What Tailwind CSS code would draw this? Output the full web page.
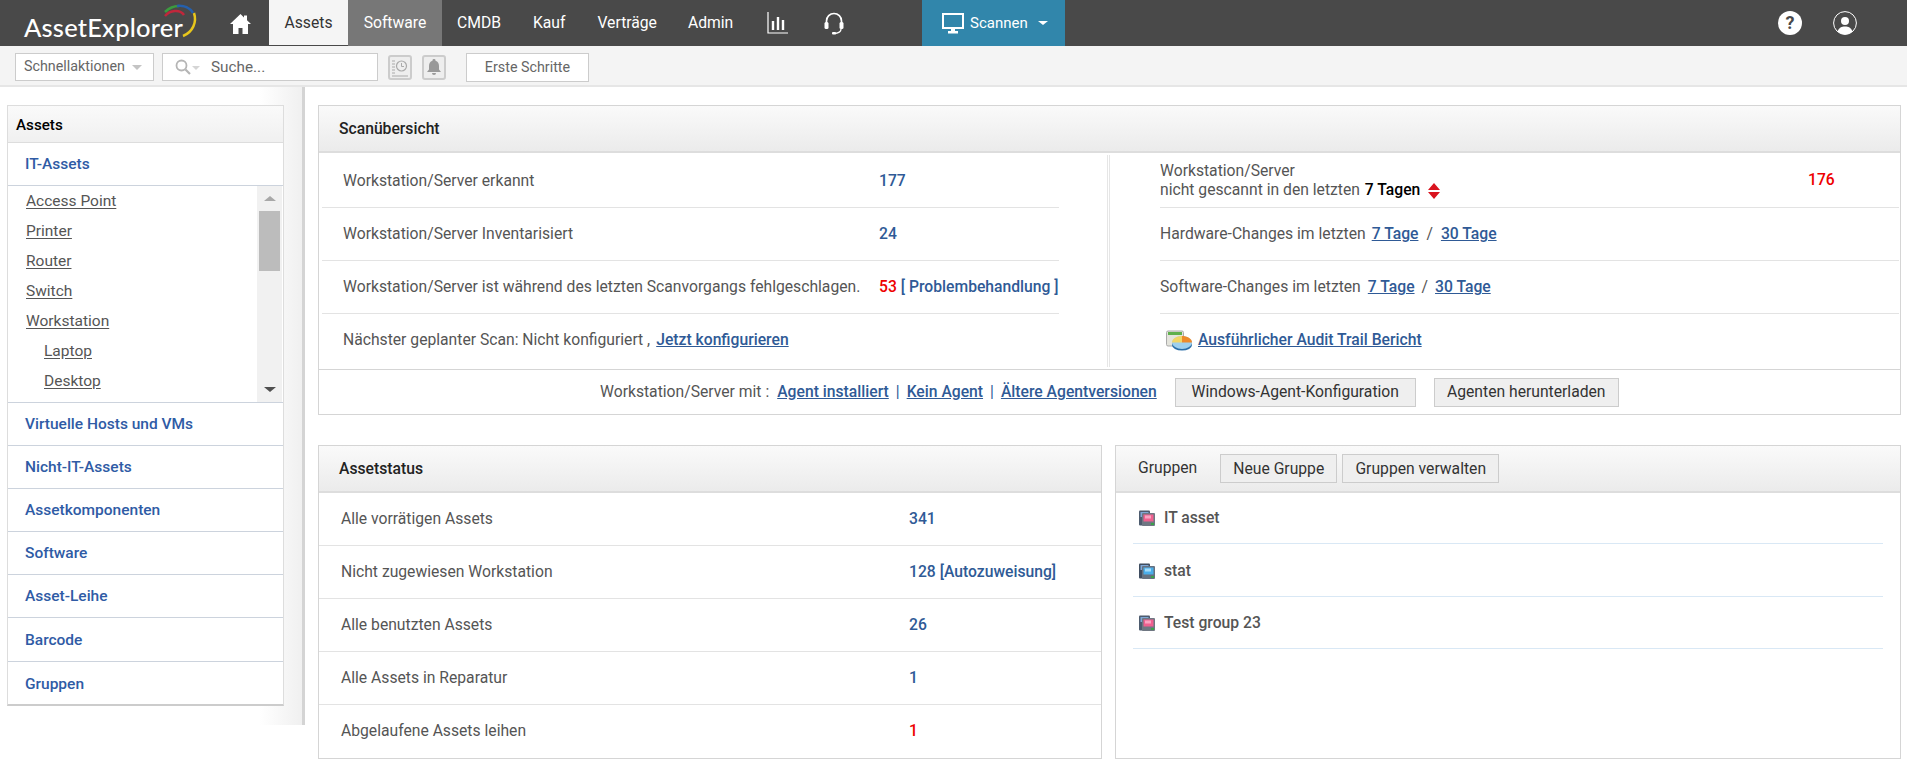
<!DOCTYPE html>
<html lang="de">
<head>
  <meta charset="UTF-8">
  <title>AssetExplorer</title>
  <script src="https://cdn.jsdelivr.net/npm/@tailwindcss/browser@4"></script>
</head>
<body class="bg-white text-[#555] text-[15.7px] [font-family:Roboto,sans-serif] overflow-hidden">
  <!-- top nav -->
  <header class="flex h-[46px] bg-[#494949] text-white text-[15.7px]">
    <div class="relative w-[230px] shrink-0">
      <span class="absolute left-[24px] top-[10px] text-[25.5px] leading-[34px] tracking-[0.2px] [font-family:Lato,sans-serif] font-medium">AssetExplorer</span>
      <svg class="absolute left-[160px] top-[2px]" width="40" height="38" viewBox="0 0 40 38" fill="none">
        <path d="M5 10C9 6 14 4 19 4" stroke="#3c9a3f" stroke-width="2.5"/>
        <path d="M17 4C24 3 30 6 33 11" stroke="#2560ad" stroke-width="2.5"/>
        <path d="M5 14C10 8 20 7 24 13" stroke="#c0273b" stroke-width="2.5"/>
        <path d="M34 11C37 20 33 30 23 34" stroke="#e7c61c" stroke-width="2.5"/>
      </svg>
    </div>
    <a class="w-[39px] shrink-0 flex items-center pt-[1px]">
      <svg width="21" height="20" viewBox="0 0 21 20" fill="#fff"><path d="M10.5 0L0 10h3v10h5.5v-6h4v6H18V10h3l-4-3.8V1.5h-3v1.9z"/></svg>
    </a>
    <a class="w-[79px] shrink-0 flex items-center justify-center bg-[#f5f5f5] text-[#333] h-[45px]">Assets</a>
    <a class="w-[94px] shrink-0 flex items-center justify-center bg-[#777]">Software</a>
    <nav class="flex items-center w-[480px] shrink-0">
      <a class="ml-[15px]">CMDB</a>
      <a class="ml-[32px]">Kauf</a>
      <a class="ml-[32px]">Verträge</a>
      <a class="ml-[31px]">Admin</a>
      <svg class="ml-[34px]" width="21" height="22" viewBox="0 0 21 22" fill="none" stroke="#fff"><path d="M1 0v21h20" stroke-width="1.2"/><path d="M6 9v9M11 5v13M16 8v10" stroke-width="2.4"/></svg>
      <svg class="ml-[36px]" width="20" height="23" viewBox="0 0 20 23" fill="none" stroke="#fff"><path d="M2.5 13V9a7.5 7.5 0 0 1 15 0v4" stroke-width="1.7"/><rect x="0.5" y="10" width="4" height="7" rx="1.5" fill="#fff" stroke="none"/><rect x="15.5" y="10" width="4" height="7" rx="1.5" fill="#fff" stroke="none"/><path d="M17 17c0 3-2 4-6 4.500" stroke-width="1.3"/><rect x="8" y="20" width="4" height="2.500" rx="1" fill="#fff" stroke="none"/></svg>
    </nav>
    <a class="w-[143px] shrink-0 flex items-center bg-[#3186ab] pl-[20px]">
      <svg width="22" height="21" viewBox="0 0 22 21"><path fill="#fff" d="M0 0h22v16H13v2h3v2.500H6V18h3v-2H0zM2 2v12h18V2z"/></svg>
      <span class="ml-[6px] text-[15px]">Scannen</span>
      <span class="ml-[10px] w-0 h-0 border-x-[5px] border-x-transparent border-t-[4px] border-t-white"></span>
    </a>
    <div class="ml-auto flex items-center pr-[50px] gap-[31px]">
      <span class="w-[24px] h-[24px] rounded-full bg-white text-[#494949] flex items-center justify-center text-[18px] font-bold leading-none">?</span>
      <svg width="24" height="24" viewBox="0 0 24 24" fill="none"><circle cx="12" cy="12" r="11.400" stroke="#fff" stroke-width="1"/><circle cx="12" cy="10" r="4" fill="#fff"/><path d="M4.500 20.500C6 16.500 8.500 15.500 12 15.500s6 1 7.500 5C17.500 22.500 15 23.500 12 23.500s-5.500-1-7.500-3z" fill="#fff"/></svg>
    </div>
  </header>

  <!-- toolbar -->
  <div class="flex h-[41px] items-start pt-[7px] pl-[15px] bg-[#f4f4f4] border-b-2 border-[#e6e6e6] text-[14.3px] text-[#666]">
    <div class="w-[139px] h-[28px] bg-white border border-[#ccc] flex items-center pl-[8px]">
      Schnellaktionen
      <span class="ml-[7px] w-0 h-0 border-x-[5px] border-x-transparent border-t-[5px] border-t-[#c4c4c4]"></span>
    </div>
    <div class="ml-[8px] w-[216px] h-[28px] bg-white border border-[#ccc] flex items-center pl-[12px] text-[15.3px]">
      <svg width="16" height="16" viewBox="0 0 16 16" fill="none" stroke="#b5b5b5"><circle cx="6.500" cy="6.500" r="5" stroke-width="1.800"/><path d="M10.500 10.500L15 15" stroke-width="2.200"/></svg>
      <span class="ml-[1px] mt-[2px] w-0 h-0 border-x-[4px] border-x-transparent border-t-[4px] border-t-[#d5d5d5]"></span>
      <span class="ml-[11px]">Suche...</span>
    </div>
    <div class="ml-[10px] mt-[2px] w-[24px] h-[25px] rounded-[3px] border-2 border-[#ccc] bg-[#eee] flex items-center justify-center">
      <svg width="18" height="20" viewBox="0 0 18 20" fill="none" stroke="#aaa"><path d="M1 3h3M1 6h3M1 9h3M1 12h3M1 15h3M1 18h16" stroke-width="1"/><circle cx="10.500" cy="8" r="5" stroke-width="1.200"/><path d="M10.500 5v3.500h2.500" stroke-width="1"/></svg>
    </div>
    <div class="ml-[10px] mt-[2px] w-[24px] h-[25px] rounded-[3px] border-2 border-[#ccc] bg-[#eee] flex items-center justify-center">
      <svg width="14" height="17" viewBox="0 0 14 17" fill="#999"><path d="M7 0a1.500 1.500 0 0 1 1.500 1.700C11 2.500 12 4.500 12 7v3.500l2 2.500H0l2-2.500V7c0-2.500 1-4.500 3.500-5.300A1.500 1.500 0 0 1 7 0zM5 14h4a2 2 0 0 1-4 0z"/></svg>
    </div>
    <div class="ml-[20px] w-[123px] h-[29px] bg-white border border-[#ccc] flex items-center justify-center">Erste Schritte</div>
  </div>

  <div class="flex items-start">
    <!-- sidebar -->
    <div class="w-[305px] shrink-0 h-[638px] flex border-r-[3px] border-[#d4d4d4] bg-gradient-to-r from-white from-[86%] to-[#f0f0f0]">
      <aside class="ml-[7px] mt-[18px] w-[277px] h-[601px] bg-white border border-[#ddd] border-b-[2px] border-b-[#ccc] text-[15.5px] font-medium text-[#2f5ba5]">
        <div class="h-[37px] flex items-center pl-[8px] pt-[2px] text-[15.2px] text-black border-b border-[#ddd] bg-gradient-to-b from-[#fafafa] to-[#f0f0f0]">Assets</div>
        <div class="h-[43px] flex items-center pl-[17px] pt-[2px] border-b border-[#ccd3dd]">IT-Assets</div>
        <div class="flex h-[217px] border-b border-[#ccd3dd] font-normal text-[#555]">
          <ul class="flex-1 pl-[18px] pt-[1px] underline underline-offset-2">
            <li class="h-[30px] leading-[28px]">Access Point</li>
            <li class="h-[30px] leading-[28px]">Printer</li>
            <li class="h-[30px] leading-[28px]">Router</li>
            <li class="h-[30px] leading-[28px]">Switch</li>
            <li class="h-[30px] leading-[28px]">Workstation</li>
            <li class="h-[30px] leading-[28px] pl-[18px]">Laptop</li>
            <li class="h-[30px] leading-[28px] pl-[18px]">Desktop</li>
          </ul>
          <div class="w-[25px] mr-[1px] bg-[#f1f1f1] flex flex-col items-center pt-[10px]">
            <span class="w-0 h-0 border-x-[6px] border-x-transparent border-b-[5px] border-b-[#a8a8a8]"></span>
            <span class="mt-[10px] w-[21px] h-[60px] bg-[#bcbcbc]"></span>
            <span class="mt-auto mb-[10px] w-0 h-0 border-x-[6px] border-x-transparent border-t-[5px] border-t-[#505050]"></span>
          </div>
        </div>
        <div class="h-[43px] flex items-center pl-[17px] pt-[2px] border-b border-[#ccd3dd]">Virtuelle Hosts und VMs</div>
        <div class="h-[43px] flex items-center pl-[17px] pt-[2px] border-b border-[#ccd3dd]">Nicht-IT-Assets</div>
        <div class="h-[43px] flex items-center pl-[17px] pt-[2px] border-b border-[#ccd3dd]">Assetkomponenten</div>
        <div class="h-[43px] flex items-center pl-[17px] pt-[2px] border-b border-[#ccd3dd]">Software</div>
        <div class="h-[43px] flex items-center pl-[17px] pt-[2px] border-b border-[#ccd3dd]">Asset-Leihe</div>
        <div class="h-[44px] flex items-center pl-[17px] pt-[2px] border-b border-[#ccd3dd]">Barcode</div>
        <div class="h-[43px] flex items-center pl-[17px] pt-[2px]">Gruppen</div>
      </aside>
    </div>

    <!-- main -->
    <main class="ml-[13px] w-[1583px] pt-[18px]">
      <section class="h-[310px] border border-[#d5d5d5] flex flex-col">
        <div class="h-[47px] shrink-0 pl-[20px] flex items-center font-medium text-[#222] border-b-2 border-[#ddd] bg-gradient-to-b from-[#fafafa] to-[#ebebeb]">Scanübersicht</div>
        <div class="flex h-[217px] shrink-0 border-b border-[#d5d5d5]">
          <div class="ml-[3px] w-[737px] shrink-0">
            <div class="h-[55px] flex items-center pl-[21px] pt-[2px] border-b border-[#e3e3e3]"><span class="w-[536px]">Workstation/Server erkannt</span><span class="text-[#2f5a96] font-medium">177</span></div>
            <div class="h-[53px] flex items-center pl-[21px] border-b border-[#e3e3e3]"><span class="w-[536px]">Workstation/Server Inventarisiert</span><span class="text-[#2f5a96] font-medium">24</span></div>
            <div class="h-[53px] flex items-center pl-[21px] border-b border-[#e3e3e3]"><span class="w-[536px] whitespace-nowrap">Workstation/Server ist während des letzten Scanvorgangs fehlgeschlagen.</span><span class="text-[#e00] font-medium">53</span><span class="ml-[4px] text-[#2f5a96] font-medium whitespace-nowrap">[ Problembehandlung ]</span></div>
            <div class="h-[50px] flex items-center pl-[21px] pt-[2px]">Nächster geplanter Scan: Nicht konfiguriert ,<a class="ml-[6px] text-[#2f5a96] font-medium underline">Jetzt konfigurieren</a></div>
          </div>
          <div class="ml-[48px] mt-[2px] h-[212px] w-[3px] border-x border-[#e6e6e6] shrink-0"></div>
          <div class="ml-[50px] w-[739px] shrink-0">
            <div class="h-[55px] flex items-center border-b border-[#e3e3e3]">
              <div class="w-[648px] leading-[19px]">Workstation/Server<br>nicht gescannt in den letzten <span class="ml-[1px] text-black font-medium">7 Tagen</span>
                <svg class="inline-block ml-[3px]" width="14" height="16" viewBox="0 0 14 16" fill="#d9141f"><path d="M7 0l6 7H1zM7 16l-6-7h12z"/></svg>
              </div>
              <span class="text-[#e00] font-medium">176</span>
            </div>
            <div class="h-[53px] flex items-center border-b border-[#e3e3e3]">Hardware-Changes im letzten<a class="ml-[6px] text-[#2f5a96] font-medium underline">7 Tage</a><span class="mx-[8px]">/</span><a class="text-[#2f5a96] font-medium underline">30 Tage</a></div>
            <div class="h-[53px] flex items-center border-b border-[#e3e3e3]">Software-Changes im letzten<a class="ml-[7px] text-[#2f5a96] font-medium underline">7 Tage</a><span class="mx-[7px]">/</span><a class="text-[#2f5a96] font-medium underline">30 Tage</a></div>
            <div class="h-[50px] flex items-center pl-[6px] pt-[2px]">
              <svg width="27" height="21" viewBox="0 0 27 21">
                <rect x="0.500" y="1" width="17" height="15" rx="1.500" fill="#e4e4dc" stroke="#aaa"/><rect x="2" y="2" width="14" height="3" fill="#5fb04c"/>
                <ellipse cx="16" cy="15" rx="10" ry="5.500" fill="#2a6ea8"/><ellipse cx="16" cy="12.500" rx="10" ry="6.500" fill="#9fd0ee"/><path d="M16 12.500V6c5 0 10 2.500 10 6.500z" fill="#ee8a2b"/><path d="M6 12.500C6 9 10 6 16 6v6.500z" fill="#f2d667"/>
              </svg>
              <a class="ml-[5px] text-[#2f5a96] font-medium underline">Ausführlicher Audit Trail Bericht</a>
            </div>
          </div>
        </div>
        <div class="flex-1 flex items-center pl-[281px]">
          <span>Workstation/Server mit :</span>
          <a class="ml-[8px] text-[#2f5a96] font-medium underline">Agent installiert</a><span class="mx-[7px] text-[#2f5a96]">|</span>
          <a class="text-[#2f5a96] font-medium underline">Kein Agent</a><span class="mx-[7px] text-[#2f5a96]">|</span>
          <a class="text-[#2f5a96] font-medium underline">Ältere Agentversionen</a>
          <button class="ml-[18px] w-[241px] h-[29px] bg-[#efefef] border border-[#ccc] text-[#333] whitespace-nowrap">Windows-Agent-Konfiguration</button>
          <button class="ml-[18px] w-[185px] h-[29px] bg-[#efefef] border border-[#ccc] text-[#333] whitespace-nowrap">Agenten herunterladen</button>
        </div>
      </section>

      <div class="flex mt-[30px] gap-[13px]">
        <section class="w-[784px] h-[314px] shrink-0 border border-[#d5d5d5]">
          <div class="h-[47px] pl-[20px] flex items-center font-medium text-[#222] border-b-2 border-[#ddd] bg-gradient-to-b from-[#fafafa] to-[#ebebeb]">Assetstatus</div>
          <div class="h-[53px] flex items-center pl-[22px] border-b border-[#e3e3e3]"><span class="w-[568px]">Alle vorrätigen Assets</span><span class="text-[#2f5a96] font-medium">341</span></div>
          <div class="h-[53px] flex items-center pl-[22px] border-b border-[#e3e3e3]"><span class="w-[568px]">Nicht zugewiesen Workstation</span><span class="text-[#2f5a96] font-medium">128 [Autozuweisung]</span></div>
          <div class="h-[53px] flex items-center pl-[22px] border-b border-[#e3e3e3]"><span class="w-[568px]">Alle benutzten Assets</span><span class="text-[#2f5a96] font-medium">26</span></div>
          <div class="h-[53px] flex items-center pl-[22px] border-b border-[#e3e3e3]"><span class="w-[568px]">Alle Assets in Reparatur</span><span class="text-[#2f5a96] font-medium">1</span></div>
          <div class="h-[53px] flex items-center pl-[22px] pb-[2px]"><span class="w-[568px]">Abgelaufene Assets leihen</span><span class="text-[#e00] font-medium">1</span></div>
        </section>

        <section class="w-[786px] h-[314px] shrink-0 border border-[#d5d5d5]">
          <div class="h-[47px] pl-[22px] flex items-center text-[#333] border-b-2 border-[#ddd] bg-gradient-to-b from-[#fafafa] to-[#ebebeb]">
            <span class="pb-[2px]">Gruppen</span>
            <button class="ml-[23px] w-[117px] h-[29px] bg-[#efefef] border border-[#ccc] text-[#333]">Neue Gruppe</button>
            <button class="ml-[5px] w-[157px] h-[29px] bg-[#efefef] border border-[#ccc] text-[#333]">Gruppen verwalten</button>
          </div>
          <div class="mx-[17px]">
            <div class="h-[51px] flex items-center pl-[6px] font-medium text-[#555] border-b border-[#d9e8f5]">
              <svg width="16" height="16" viewBox="0 0 16 16"><rect x="0" y="0.500" width="11" height="15" rx="1" fill="#4d5b6e"/><rect x="1.500" y="2" width="8" height="5" fill="#7fa7d6"/><rect x="3" y="3" width="13" height="13" rx="1" fill="#6f7782"/><rect x="4.500" y="4.500" width="10" height="7" fill="#f0608f"/><rect x="6" y="5.500" width="6" height="3" fill="#f9a3c1"/><rect x="12" y="13" width="3" height="2" fill="#3aa24a"/></svg>
              <span class="ml-[9px]">IT asset</span>
            </div>
            <div class="h-[53px] flex items-center pl-[6px] pt-[2px] font-medium text-[#555] border-b border-[#d9e8f5]">
              <svg width="16" height="16" viewBox="0 0 16 16"><rect x="0" y="0.500" width="11" height="15" rx="1" fill="#3f4d60"/><rect x="1.500" y="2" width="8" height="5" fill="#7fa7d6"/><rect x="3" y="3" width="13" height="13" rx="1" fill="#66717f"/><rect x="4.500" y="4.500" width="10" height="7" fill="#4aaeea"/><rect x="6" y="5.500" width="6" height="3" fill="#a3dcf9"/><rect x="12" y="13" width="3" height="2" fill="#3aa24a"/></svg>
              <span class="ml-[9px]">stat</span>
            </div>
            <div class="h-[52px] flex items-center pl-[6px] font-medium text-[#555] border-b border-[#d9e8f5]">
              <svg width="16" height="16" viewBox="0 0 16 16"><rect x="0" y="0.500" width="11" height="15" rx="1" fill="#4d5b6e"/><rect x="1.500" y="2" width="8" height="5" fill="#7fa7d6"/><rect x="3" y="3" width="13" height="13" rx="1" fill="#6f7782"/><rect x="4.500" y="4.500" width="10" height="7" fill="#f0608f"/><rect x="6" y="5.500" width="6" height="3" fill="#f9a3c1"/><rect x="12" y="13" width="3" height="2" fill="#3aa24a"/></svg>
              <span class="ml-[9px]">Test group 23</span>
            </div>
          </div>
        </section>
      </div>
    </main>
  </div>
</body>
</html>
